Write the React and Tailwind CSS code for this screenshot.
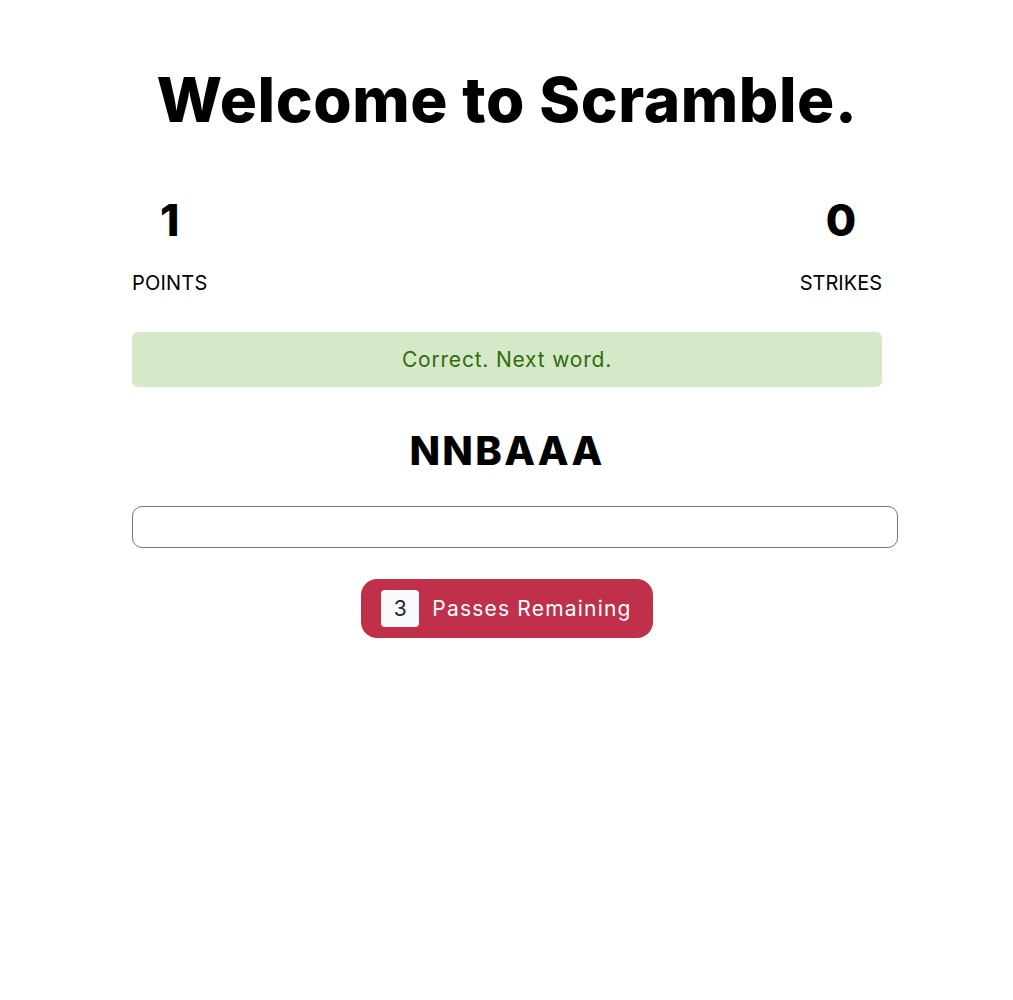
export default function App() {
  const font = { fontFamily: 'Inter, "Noto Sans", sans-serif' };
  return (
    <div className="min-h-[1000px] bg-white text-black" style={font}>
      <div className="w-[750px] ml-[132px] flex flex-col pt-[66px]">
        <h1 className="text-center text-[62px] leading-[68px] font-extrabold tracking-[0.6px]">Welcome to Scramble.</h1>
        <div className="flex justify-between mt-[58px]">
          <div className="flex flex-col items-center">
            <div className="text-[44px] leading-[56px] font-extrabold">1</div>
            <div className="text-[20px] leading-[28px] mt-[21px] tracking-[0.2px]">POINTS</div>
          </div>
          <div className="flex flex-col items-center">
            <div className="text-[44px] leading-[56px] font-extrabold">0</div>
            <div className="text-[20px] leading-[28px] mt-[21px]">STRIKES</div>
          </div>
        </div>
        <div className="mt-[35px] h-[55px] rounded-[6px] bg-[#d5e9c9] text-[#326b0e] text-[21px] tracking-[0.8px] flex items-center justify-center">Correct. Next word.</div>
        <div className="mt-[38px] text-center text-[40px] leading-[52px] font-extrabold tracking-[2.3px]">NNBAAA</div>
        <input className="mt-[29px] w-[766px] h-[42px] rounded-[10px] border border-[#777] outline-none px-3" />
        <div className="flex justify-center mt-[31px] w-[766px] pr-[16px]">
          <button className="h-[59px] rounded-[16px] bg-[#c1304a] text-white text-[21px] flex items-center pl-[20px] pr-[21px] gap-[13px]">
            <span className="w-[38px] h-[37px] bg-[#f8f9fa] text-[#212529] rounded-[4px] flex items-center justify-center">3</span>
            <span className="tracking-[1.2px]">Passes Remaining</span>
          </button>
        </div>
      </div>
    </div>
  );
}
